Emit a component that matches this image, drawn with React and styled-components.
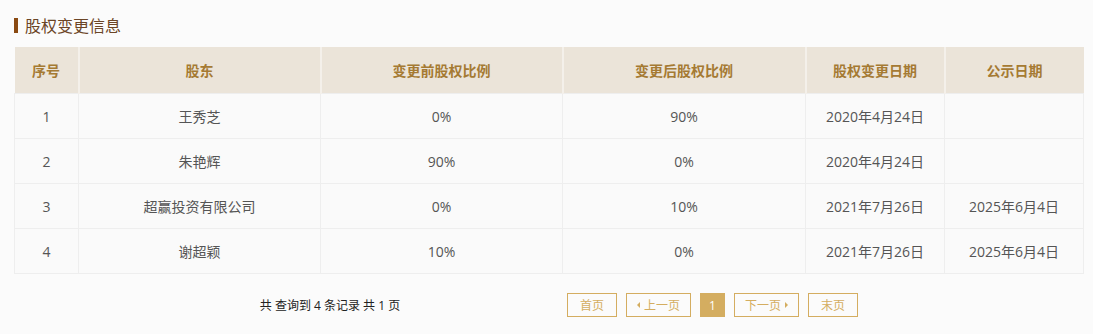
import React from "react";
import styled, { createGlobalStyle } from "styled-components";

const GlobalStyle = createGlobalStyle`
  html, body {
    margin: 0;
    padding: 0;
    background: #fbfbfb;
    font-family: "Open Sans", "Noto Sans CJK SC", sans-serif;
  }
`;

const Page = styled.div`
  padding: 14px 10px 0 14px;
  width: 1069px;
`;

const Title = styled.h3`
  display: flex;
  align-items: center;
  margin: 0 0 11px;
  height: 22px;
  font-size: 16px;
  font-weight: normal;
  color: #6b4526;
  &::before {
    content: "";
    width: 4px;
    height: 15px;
    background: #8a4a12;
    margin-right: 7px;
  }
`;

const Table = styled.table`
  width: 1069px;
  border-collapse: collapse;
  table-layout: fixed;
  font-size: 14px;
`;

const Head = styled.th`
  height: 46px;
  padding: 0;
  background: #ebe4d9;
  color: #a57a33;
  font-weight: bold;
  text-align: center;
  border-left: 2px solid #f4f0ea;
  &:first-child {
    border-left: none;
  }
`;

const Cell = styled.td`
  height: 44px;
  padding: 0;
  text-align: center;
  color: #555;
  background: #fafafa;
  border: 1px solid #eeeeee;
`;

const Pager = styled.div`
  display: flex;
  align-items: center;
  margin-top: 19px;
  height: 24px;
`;

const Info = styled.div`
  width: 260px;
  margin-left: 186px;
  text-align: center;
  font-size: 12px;
  color: #222;
`;

const Buttons = styled.div`
  display: flex;
  gap: 9px;
  margin-left: 107px;
`;

const PageBtn = styled.span`
  box-sizing: border-box;
  display: flex;
  align-items: center;
  justify-content: center;
  gap: 4px;
  height: 24px;
  width: ${(p) => p.w}px;
  font-size: 12px;
  border: 1px solid #d4ad60;
  color: ${(p) => (p.active ? "#fff" : "#d4ad60")};
  background: ${(p) => (p.active ? "#d4ad60" : "transparent")};
`;

const Arrow = styled.span`
  width: 0;
  height: 0;
  border-top: 3px solid transparent;
  border-bottom: 3px solid transparent;
  ${(p) =>
    p.dir === "left"
      ? "border-right: 3px solid #d4ad60;"
      : "border-left: 3px solid #d4ad60;"}
`;

const columns = [
  { name: "序号", width: 64 },
  { name: "股东", width: 242 },
  { name: "变更前股权比例", width: 242 },
  { name: "变更后股权比例", width: 243 },
  { name: "股权变更日期", width: 139 },
  { name: "公示日期", width: 139 },
];

const rows = [
  ["1", "王秀芝", "0%", "90%", "2020年4月24日", ""],
  ["2", "朱艳辉", "90%", "0%", "2020年4月24日", ""],
  ["3", "超赢投资有限公司", "0%", "10%", "2021年7月26日", "2025年6月4日"],
  ["4", "谢超颖", "10%", "0%", "2021年7月26日", "2025年6月4日"],
];

const App = () => (
  <>
    <GlobalStyle />
    <Page>
      <Title>股权变更信息</Title>
      <Table>
        <colgroup>
          {columns.map((c) => (
            <col key={c.name} style={{ width: c.width }} />
          ))}
        </colgroup>
        <thead>
          <tr>
            {columns.map((c) => (
              <Head key={c.name}>{c.name}</Head>
            ))}
          </tr>
        </thead>
        <tbody>
          {rows.map((r) => (
            <tr key={r[0]}>
              {r.map((v, i) => (
                <Cell key={i}>{v}</Cell>
              ))}
            </tr>
          ))}
        </tbody>
      </Table>
      <Pager>
        <Info>共 查询到 4 条记录 共 1 页</Info>
        <Buttons>
          <PageBtn w={50}>首页</PageBtn>
          <PageBtn w={65}>
            <Arrow dir="left" />
            上一页
          </PageBtn>
          <PageBtn w={25} active>
            1
          </PageBtn>
          <PageBtn w={65}>
            下一页
            <Arrow dir="right" />
          </PageBtn>
          <PageBtn w={50}>末页</PageBtn>
        </Buttons>
      </Pager>
    </Page>
  </>
);

export default App;
